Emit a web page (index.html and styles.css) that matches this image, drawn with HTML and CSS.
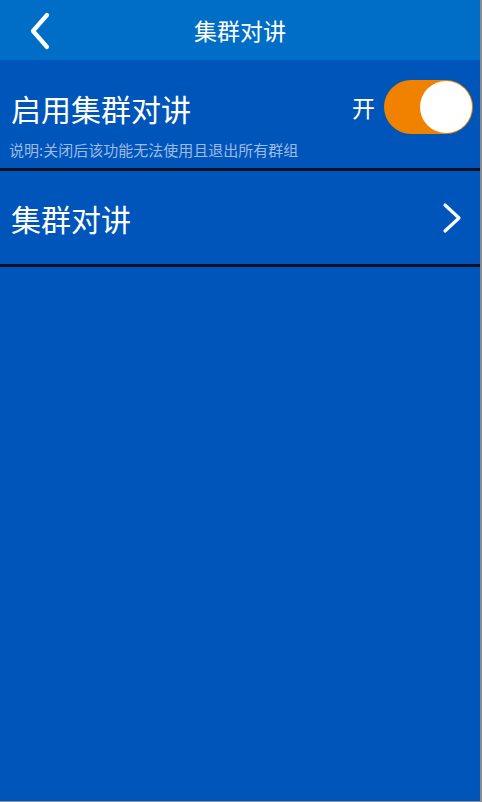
FILE: index.html
```html
<!DOCTYPE html>
<html lang="zh-CN">

<head>
  <meta charset="UTF-8">
  <meta name="viewport" content="width=device-width, initial-scale=1.0">
  <title>集群对讲</title>
  <link rel="stylesheet" href="styles.css">
</head>

<body>
  <div class="app">

    <header class="topbar">
      <a class="back" href="#">
        <svg width="24" height="38" viewBox="0 0 24 38">
          <path d="M19 3 L5 19 L19 35" fill="none" stroke="#fff" stroke-width="4.2" stroke-linecap="round" stroke-linejoin="round" />
        </svg>
      </a>
      <h1>集群对讲</h1>
    </header>

    <section class="setting">
      <div class="setting-text">
        <div class="setting-title">启用集群对讲</div>
        <div class="setting-note">说明:关闭后该功能无法使用且退出所有群组</div>
      </div>
      <div class="switch-wrap">
        <span class="switch-label">开</span>
        <div class="switch on">
          <div class="knob"></div>
        </div>
      </div>
    </section>

    <a class="entry" href="#">
      <span class="entry-title">集群对讲</span>
      <svg width="22" height="32" viewBox="0 0 22 32">
        <path d="M4 3 L18 16 L4 29" fill="none" stroke="#fff" stroke-width="3.2" stroke-linecap="round" stroke-linejoin="round" />
      </svg>
    </a>

  </div>
</body>

</html>
```

FILE: styles.css
```css
body {
  margin: 0;
  background: #8c8c8c;
  font-family: "Noto Sans CJK SC", "Noto Sans", sans-serif;
  color: #fff;
}

.app {
  width: 480px;
  height: 801px;
  background: #0055bb;
}

.topbar {
  height: 60px;
  background: #006ec6;
  display: flex;
  align-items: center;
  justify-content: center;
  position: relative;
}

.topbar h1 {
  margin: 0;
  font-size: 23px;
  font-weight: 400;
  line-height: 1;
}

.back {
  position: absolute;
  left: 28px;
  top: 12px;
  display: flex;
}

.setting {
  display: flex;
  justify-content: space-between;
  align-items: flex-start;
  padding: 28px 7px 9px 9px;
  border-bottom: 3px solid #0a1020;
}

.setting-title {
  font-size: 30px;
  line-height: 40px;
  margin-left: 2px;
}

.setting-note {
  margin-top: 13px;
  font-size: 15px;
  line-height: 18px;
  color: #9fbbe3;
}

.switch-wrap {
  display: flex;
  align-items: center;
  gap: 9px;
  margin-top: -8px;
}

.switch-label {
  font-size: 23px;
}

.switch {
  width: 89px;
  height: 54px;
  border-radius: 27px;
  background: #f08200;
  display: flex;
  align-items: center;
  justify-content: flex-end;
  padding: 0 1px;
  box-sizing: border-box;
}

.knob {
  width: 52px;
  height: 52px;
  border-radius: 50%;
  background: #fff;
}

.entry {
  display: flex;
  justify-content: space-between;
  align-items: center;
  height: 93px;
  padding: 0 17px 0 11px;
  color: #fff;
  text-decoration: none;
  border-bottom: 3px solid #0a1020;
}

.entry-title {
  font-size: 30px;
}
```
